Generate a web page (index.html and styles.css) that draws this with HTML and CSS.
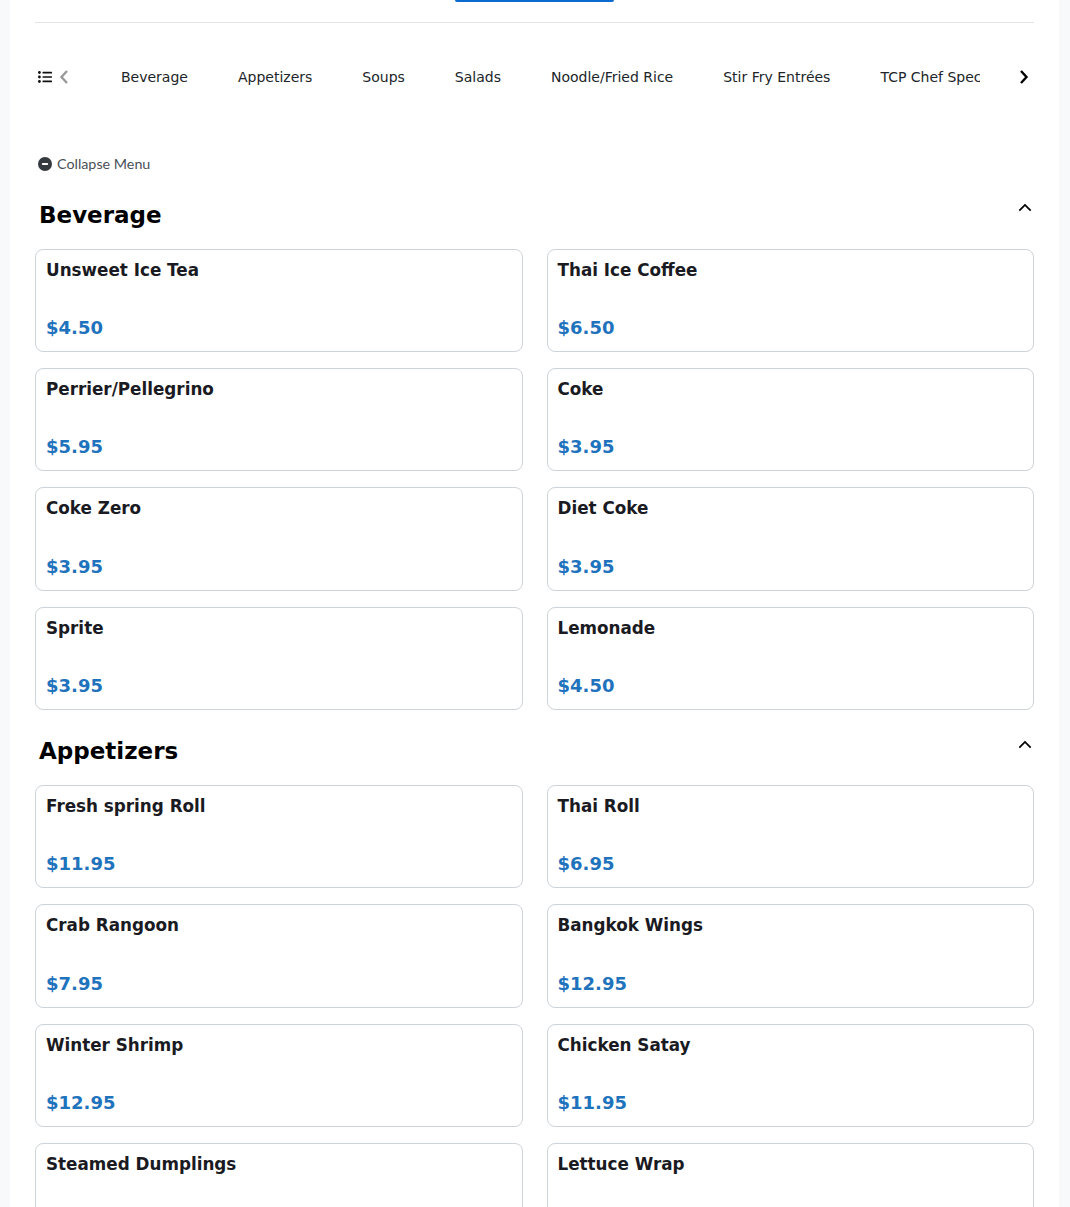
FILE: index.html
```html
<!DOCTYPE html>
<html lang="en">
<head>
<meta charset="utf-8">
<title>Menu</title>
<link rel="stylesheet" href="styles.css">
</head>
<body>
<main class="page">
  <div class="topbar"><span class="top-btn"></span></div>
  <nav class="catnav">
    <svg class="ic-list" viewBox="0 0 14 12" width="14" height="12" fill="currentColor"><circle cx="1.4" cy="1.500" r="1.400"/><circle cx="1.400" cy="6" r="1.400"/><circle cx="1.400" cy="10.500" r="1.400"/><rect x="4.500" y="0.700" width="9.500" height="1.700" rx=".5"/><rect x="4.500" y="5.150" width="9.500" height="1.700" rx=".5"/><rect x="4.500" y="9.600" width="9.500" height="1.700" rx=".5"/></svg>
    <svg class="ic-prev" viewBox="0 0 10 16" width="10" height="16" fill="none" stroke="currentColor" stroke-width="2.400"><path d="M8 2 2.500 8 8 14"/></svg>
    <div class="cats">
      <a>Beverage</a><a>Appetizers</a><a>Soups</a><a>Salads</a><a>Noodle/Fried Rice</a><a>Stir Fry Entrées</a><a>TCP Chef Specials</a>
    </div>
    <svg class="ic-next" viewBox="0 0 10 16" width="10" height="16" fill="none" stroke="currentColor" stroke-width="2.400"><path d="M2 2 7.500 8 2 14"/></svg>
  </nav>
  <div class="collapse">
    <svg viewBox="0 0 14 14" width="14" height="14"><circle cx="7" cy="7" r="7" fill="#343a40"/><rect x="3.800" y="6" width="6.400" height="2" rx="1" fill="#fff"/></svg>
    <span>Collapse Menu</span>
  </div>

  <section class="sec">
    <header class="sec-head"><h2>Beverage</h2><svg viewBox="0 0 16 10" width="14" height="9" fill="none" stroke="currentColor" stroke-width="2"><path d="M1.500 8.500 8 2l6.500 6.500"/></svg></header>
    <div class="grid">
      <article class="card"><h3>Unsweet Ice Tea</h3><p>$4.50</p></article>
      <article class="card"><h3>Thai Ice Coffee</h3><p>$6.50</p></article>
      <article class="card"><h3>Perrier/Pellegrino</h3><p>$5.95</p></article>
      <article class="card"><h3>Coke</h3><p>$3.95</p></article>
      <article class="card"><h3>Coke Zero</h3><p>$3.95</p></article>
      <article class="card"><h3>Diet Coke</h3><p>$3.95</p></article>
      <article class="card"><h3>Sprite</h3><p>$3.95</p></article>
      <article class="card"><h3>Lemonade</h3><p>$4.50</p></article>
    </div>
  </section>

  <section class="sec">
    <header class="sec-head"><h2>Appetizers</h2><svg viewBox="0 0 16 10" width="14" height="9" fill="none" stroke="currentColor" stroke-width="2"><path d="M1.500 8.500 8 2l6.500 6.500"/></svg></header>
    <div class="grid">
      <article class="card"><h3>Fresh spring Roll</h3><p>$11.95</p></article>
      <article class="card"><h3>Thai Roll</h3><p>$6.95</p></article>
      <article class="card"><h3>Crab Rangoon</h3><p>$7.95</p></article>
      <article class="card"><h3>Bangkok Wings</h3><p>$12.95</p></article>
      <article class="card"><h3>Winter Shrimp</h3><p>$12.95</p></article>
      <article class="card"><h3>Chicken Satay</h3><p>$11.95</p></article>
      <article class="card"><h3>Steamed Dumplings</h3><p class="faded">$9.95</p></article>
      <article class="card"><h3>Lettuce Wrap</h3><p class="faded">$11.95</p></article>
    </div>
  </section>
</main>
</body>
</html>
```
FILE: styles.css
```css
* { box-sizing: border-box; }
html, body { margin: 0; height: 1207px; overflow: hidden; background: #f8f9fa; }
body { font-family: "DejaVu Sans", sans-serif; color: #212529; }
.page { width: 1049px; height: 1207px; margin-left: 10px; padding: 0 25px; background: #fff; overflow: hidden; }
.topbar { height: 23px; border-bottom: 1px solid #e3e3e3; display: flex; justify-content: center; }
.top-btn { width: 159px; height: 2px; background: #0a6ad0; border-radius: 0 0 4px 4px; }
.catnav { height: 108px; display: flex; align-items: center; padding-left: 3px; color: #000; }
.ic-list { flex: none; margin-right: 7px; color: #111; }
.ic-prev { flex: none; color: #999; }
.cats { flex: none; width: 910px; margin-left: 1px; padding-left: 51px; display: flex; gap: 50px; overflow: hidden; white-space: nowrap; font-size: 14px; color: #212529; }
.cats a { flex: none; }
.ic-next { flex: none; margin-left: 39px; }
.collapse { display: flex; align-items: center; gap: 5px; height: 20px; margin: 22.7px 0 0 3px; font-family: "Lato", sans-serif; font-size: 14.3px; color: #495057; }
.sec { margin-top: 8px; }
.sec-head { height: 67px; display: flex; justify-content: space-between; align-items: flex-start; color: #000; }
.sec-head h2 { margin: 15px 0 0 4px; font-size: 23px; line-height: 36px; font-weight: 700; }
.sec-head svg { margin: 21.5px 2px 0 0; }
.grid { display: grid; grid-template-columns: 1fr 1fr; column-gap: 24px; row-gap: 16px; }
.card { height: 103.33px; border: 1px solid #ced4da; border-radius: 8px; padding: 10px 10px 9px; display: flex; flex-direction: column; justify-content: space-between; }
.card h3 { margin: 0; font-size: 16.8px; line-height: 21px; font-weight: 700; color: #1a1a22; }
.card p { margin: 0 0 2px; font-size: 18px; line-height: 24px; font-weight: 700; color: #1f73bd; }
.card p.faded { color: #f5f9f3; }
```
